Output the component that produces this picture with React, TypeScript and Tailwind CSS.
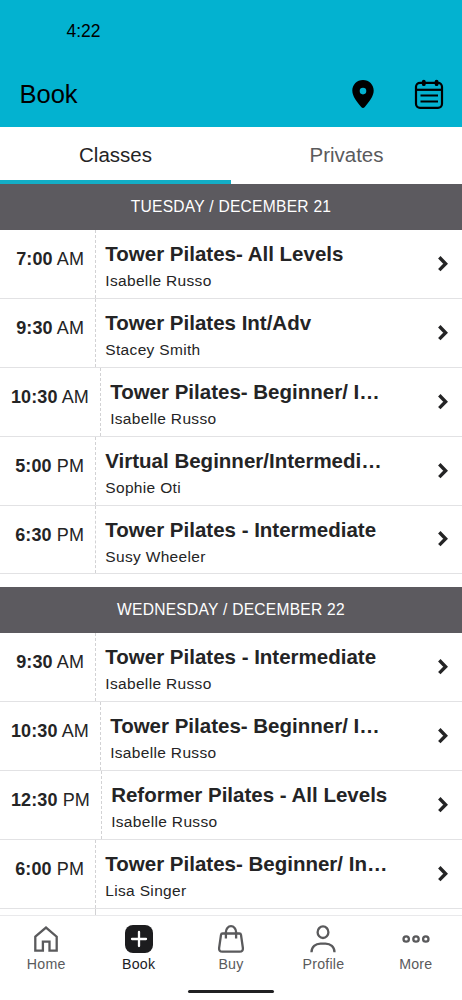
import type { ReactNode } from "react";
import clsx from "clsx";

type ClassItem = {
  time: string;
  period: "AM" | "PM";
  title: string;
  instructor: string;
};

type Day = {
  label: string;
  classes: ClassItem[];
};

const DAYS: Day[] = [
  {
    label: "TUESDAY / DECEMBER 21",
    classes: [
      { time: "7:00", period: "AM", title: "Tower Pilates- All Levels", instructor: "Isabelle Russo" },
      { time: "9:30", period: "AM", title: "Tower Pilates Int/Adv", instructor: "Stacey Smith" },
      { time: "10:30", period: "AM", title: "Tower Pilates- Beginner/ I…", instructor: "Isabelle Russo" },
      { time: "5:00", period: "PM", title: "Virtual Beginner/Intermedi…", instructor: "Sophie Oti" },
      { time: "6:30", period: "PM", title: "Tower Pilates - Intermediate", instructor: "Susy Wheeler" },
    ],
  },
  {
    label: "WEDNESDAY / DECEMBER 22",
    classes: [
      { time: "9:30", period: "AM", title: "Tower Pilates - Intermediate", instructor: "Isabelle Russo" },
      { time: "10:30", period: "AM", title: "Tower Pilates- Beginner/ I…", instructor: "Isabelle Russo" },
      { time: "12:30", period: "PM", title: "Reformer Pilates - All Levels", instructor: "Isabelle Russo" },
      { time: "6:00", period: "PM", title: "Tower Pilates- Beginner/ In…", instructor: "Lisa Singer" },
    ],
  },
];

function PinIcon() {
  return (
    <svg width="22" height="28" viewBox="0 0 22 28" aria-hidden>
      <path
        fillRule="evenodd"
        fill="#000"
        d="M11 0C4.900 0 .3 4.700.3 10.600c0 5.800 4.600 11.400 8.900 16.400q1.800 1.900 3.600 0c4.300-5 8.900-10.600 8.900-16.400C21.700 4.700 17.100 0 11 0Zm0 7.800a3.300 3.300 0 1 0 0 6.600 3.300 3.300 0 0 0 0-6.600Z"
      />
    </svg>
  );
}

function CalendarIcon() {
  return (
    <svg width="30" height="30" viewBox="0 0 30 30" fill="none" stroke="#000" strokeWidth="2.2" aria-hidden>
      <rect x="2" y="3.8" width="26" height="25" rx="4" />
      <path d="M2 10.800h26" />
      <path d="M6.500 16.400h17.500M6.500 22.400h17.500" strokeWidth="2" />
      <path d="M9.800 2.600v2.600M22.600 2.600v2.600" strokeWidth="3.800" strokeLinecap="round" />
    </svg>
  );
}

function Chevron() {
  return (
    <svg width="10" height="16" viewBox="0 0 10 16" fill="none" stroke="#242425" strokeWidth="3.4" aria-hidden>
      <path d="M1.300 1.300 7.600 7.700l-6.300 6.400" />
    </svg>
  );
}

function ClassRow({ item }: { item: ClassItem }) {
  return (
    <div className="flex h-[68.85px] shrink-0 border-b border-[#e2e2e4]">
      <div className="flex shrink-0 border-r border-dashed border-[#d2d2d4] px-[11px] pt-[17px]">
        <div className="min-w-[73px] whitespace-nowrap text-right text-[18px] leading-6 tracking-[0.1px]">
          <span className="font-bold">{item.time}</span> {item.period}
        </div>
      </div>
      <div className="min-w-0 flex-1 whitespace-nowrap pl-[9.3px] pt-[11px]">
        <div className="text-[20.5px] font-bold leading-[26px]">{item.title}</div>
        <div className="mt-1 text-[15.5px] leading-5 tracking-[0.33px]">{item.instructor}</div>
      </div>
      <div className="flex w-6 shrink-0 items-center">
        <Chevron />
      </div>
    </div>
  );
}

function NavItem({ label, active, children }: { label: string; active?: boolean; children: ReactNode }) {
  return (
    <div
      className={clsx(
        "flex flex-1 flex-col items-center",
        active ? "text-[#1c1c1e]" : "text-[#5a5a5c]",
      )}
    >
      <svg width="30" height="30" viewBox="0 0 30 30" fill="none" stroke="currentColor" strokeWidth="2.3" aria-hidden>
        {children}
      </svg>
      <span className="mt-[2px] text-[14.2px] leading-4 tracking-[0.25px]">{label}</span>
    </div>
  );
}

export default function App() {
  return (
    <div className="flex h-[1000px] w-[462px] flex-col overflow-hidden bg-white font-['Liberation_Sans',Arial,sans-serif] text-[#242425]">
      <header className="h-[127px] shrink-0 bg-[#03b2d0] text-black">
        <div className="pl-[66.5px] pt-[20px] text-[17.5px] leading-[22px]">4:22</div>
        <div className="flex items-center pl-[19.5px] pr-[18px] pt-[37px]">
          <h1 className="flex-1 text-[25.5px] leading-[30px]">Book</h1>
          <PinIcon />
          <div className="ml-[40px]">
            <CalendarIcon />
          </div>
        </div>
      </header>

      <div className="flex h-[57px] shrink-0 text-center text-[20.5px] leading-[56px]">
        <div className="flex-1 border-b-4 border-[#13aec6]">Classes</div>
        <div className="flex-1 text-[#5a5a5c]">Privates</div>
      </div>

      <main className="flex min-h-0 flex-1 flex-col overflow-hidden">
        {DAYS.map((day, i) => (
          <section key={day.label} className={clsx("shrink-0", i < DAYS.length - 1 && "mb-[12.6px]")}>
            <h2 className="h-[46.2px] bg-[#5c5a5f] text-center text-[15.6px] leading-[46px] tracking-[0.25px] text-white">
              {day.label}
            </h2>
            {day.classes.map(item => (
              <ClassRow key={item.time + item.period} item={item} />
            ))}
          </section>
        ))}
        {/* Top edge of the next row, cut off by the tab bar */}
        <div className="w-24 flex-1 border-r border-dashed border-[#d2d2d4]" />
      </main>

      <nav className="h-[85px] shrink-0 border-t border-[#e9e9eb]">
        <div className="flex pt-[8px]">
          <NavItem label="Home">
            <path d="M4.300 12.700 15 3.600l10.700 9.100v14h-7.200v-9h-6.600v9H4.300Z" />
          </NavItem>
          <NavItem label="Book" active>
            <rect x="1" y="1" width="28" height="28" rx="8" fill="currentColor" stroke="none" />
            <path d="M15 8v14M8 15h14" stroke="#fff" strokeLinecap="round" />
          </NavItem>
          <NavItem label="Buy">
            <path d="M6.600 9.500h16.800q1.400 0 1.600 1.400l1.900 13.300q.3 3.500-3.200 3.500H6.300q-3.500 0-3.200-3.500L5 10.900q.2-1.400 1.600-1.400Z" />
            <path d="M9.900 14.500V8a5.100 5.800 0 0 1 10.200 0v6.500" />
          </NavItem>
          <NavItem label="Profile">
            <ellipse cx="15" cy="8.200" rx="5.400" ry="5.800" />
            <path d="M3.500 28.300c0-5.500 4-8.600 9-8.600h5c5 0 9 3.100 9 8.600" />
          </NavItem>
          <NavItem label="More">
            <circle cx="5.200" cy="15" r="2.700" />
            <circle cx="15" cy="15" r="2.700" />
            <circle cx="24.800" cy="15" r="2.700" />
          </NavItem>
        </div>
        <div className="mx-auto mt-[18px] h-[3px] w-[86px] rounded-full bg-[#202022]" />
      </nav>
    </div>
  );
}
